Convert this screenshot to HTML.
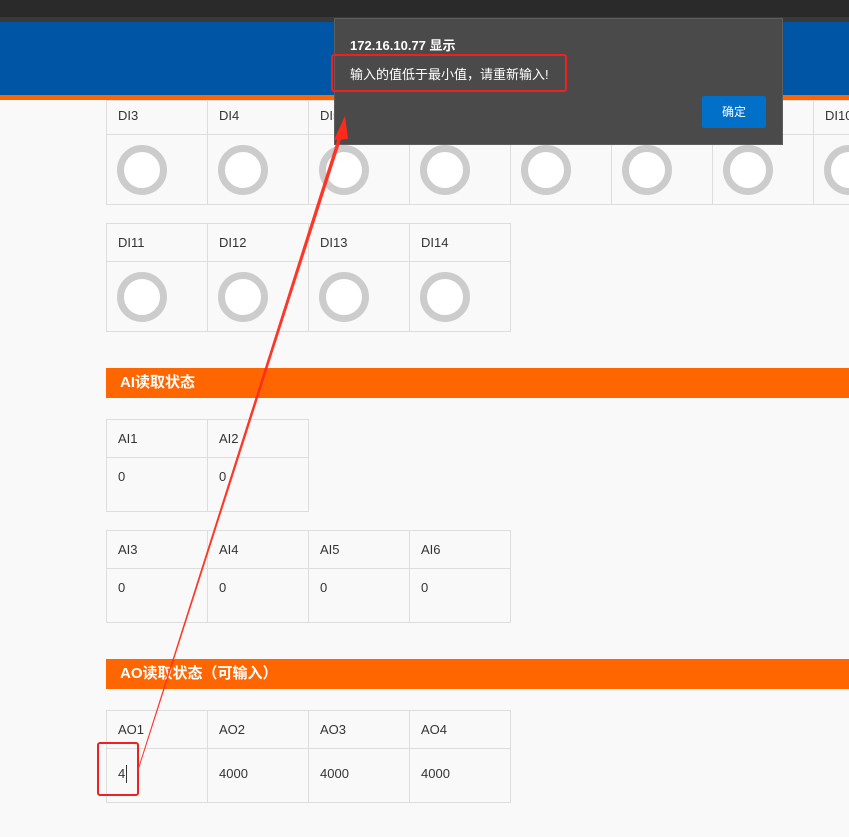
<!DOCTYPE html>
<html><head><meta charset="utf-8"><style>
body{margin:0;width:849px;height:837px;overflow:hidden;background:#f9f9f9;font-family:"Liberation Sans","Noto Sans CJK SC",sans-serif;font-size:13px;color:#333;position:relative}
.a{position:absolute}
.c{position:absolute;border:1px solid #ddd;box-sizing:border-box}
.t{position:absolute;font-size:13px;color:#333}
.ring{position:absolute;width:50px;height:50px;border:7px solid #ccc;border-radius:50%;box-sizing:border-box;background:#fff}
.bar{position:absolute;left:106px;width:743px;height:30px;background:#ff6600;color:#fff;font-weight:bold;font-size:15px;line-height:30px;padding-left:14px;box-sizing:border-box}
</style></head><body>
<div class="a" style="left:0;top:0;width:849px;height:17px;background:#2a2a2a"></div>
<div class="a" style="left:0;top:17px;width:849px;height:5px;background:#3a3a3a"></div>
<div class="a" style="left:0;top:22px;width:849px;height:73px;background:#0055a5"></div>
<div class="a" style="left:0;top:95px;width:849px;height:5px;background:#ff6600"></div>

<div class="bar" style="top:368px">AI读取状态</div>
<div class="bar" style="top:659px">AO读取状态（可输入）</div>

<div class="c" style="left:106px;top:100px;width:760px;height:105px"></div>
<div class="a" style="left:106px;top:134px;width:760px;height:1px;background:#ddd"></div>
<div class="a" style="left:207px;top:100px;width:1px;height:105px;background:#ddd"></div>
<div class="a" style="left:308px;top:100px;width:1px;height:105px;background:#ddd"></div>
<div class="a" style="left:409px;top:100px;width:1px;height:105px;background:#ddd"></div>
<div class="a" style="left:510px;top:100px;width:1px;height:105px;background:#ddd"></div>
<div class="a" style="left:611px;top:100px;width:1px;height:105px;background:#ddd"></div>
<div class="a" style="left:712px;top:100px;width:1px;height:105px;background:#ddd"></div>
<div class="a" style="left:813px;top:100px;width:1px;height:105px;background:#ddd"></div>
<div class="t" style="left:118px;top:108px">DI3</div>
<div class="t" style="left:219px;top:108px">DI4</div>
<div class="t" style="left:320px;top:108px">DI5</div>
<div class="t" style="left:825px;top:108px">DI10</div>
<div class="ring" style="left:117px;top:145px"></div>
<div class="ring" style="left:218px;top:145px"></div>
<div class="ring" style="left:319px;top:145px"></div>
<div class="ring" style="left:420px;top:145px"></div>
<div class="ring" style="left:521px;top:145px"></div>
<div class="ring" style="left:622px;top:145px"></div>
<div class="ring" style="left:723px;top:145px"></div>
<div class="ring" style="left:824px;top:145px"></div>

<div class="c" style="left:106px;top:223px;width:405px;height:109px"></div>
<div class="a" style="left:106px;top:261px;width:405px;height:1px;background:#ddd"></div>
<div class="a" style="left:207px;top:223px;width:1px;height:109px;background:#ddd"></div>
<div class="a" style="left:308px;top:223px;width:1px;height:109px;background:#ddd"></div>
<div class="a" style="left:409px;top:223px;width:1px;height:109px;background:#ddd"></div>
<div class="t" style="left:118px;top:235px">DI11</div>
<div class="t" style="left:219px;top:235px">DI12</div>
<div class="t" style="left:320px;top:235px">DI13</div>
<div class="t" style="left:421px;top:235px">DI14</div>
<div class="ring" style="left:117px;top:272px"></div>
<div class="ring" style="left:218px;top:272px"></div>
<div class="ring" style="left:319px;top:272px"></div>
<div class="ring" style="left:420px;top:272px"></div>

<div class="c" style="left:106px;top:419px;width:203px;height:93px"></div>
<div class="a" style="left:106px;top:457px;width:203px;height:1px;background:#ddd"></div>
<div class="a" style="left:207px;top:419px;width:1px;height:93px;background:#ddd"></div>
<div class="t" style="left:118px;top:431px">AI1</div>
<div class="t" style="left:219px;top:431px">AI2</div>
<div class="t" style="left:118px;top:469px">0</div>
<div class="t" style="left:219px;top:469px">0</div>

<div class="c" style="left:106px;top:530px;width:405px;height:93px"></div>
<div class="a" style="left:106px;top:568px;width:405px;height:1px;background:#ddd"></div>
<div class="a" style="left:207px;top:530px;width:1px;height:93px;background:#ddd"></div>
<div class="a" style="left:308px;top:530px;width:1px;height:93px;background:#ddd"></div>
<div class="a" style="left:409px;top:530px;width:1px;height:93px;background:#ddd"></div>
<div class="t" style="left:118px;top:542px">AI3</div>
<div class="t" style="left:219px;top:542px">AI4</div>
<div class="t" style="left:320px;top:542px">AI5</div>
<div class="t" style="left:421px;top:542px">AI6</div>
<div class="t" style="left:118px;top:580px">0</div>
<div class="t" style="left:219px;top:580px">0</div>
<div class="t" style="left:320px;top:580px">0</div>
<div class="t" style="left:421px;top:580px">0</div>

<div class="c" style="left:106px;top:710px;width:405px;height:93px"></div>
<div class="a" style="left:106px;top:748px;width:405px;height:1px;background:#ddd"></div>
<div class="a" style="left:207px;top:710px;width:1px;height:93px;background:#ddd"></div>
<div class="a" style="left:308px;top:710px;width:1px;height:93px;background:#ddd"></div>
<div class="a" style="left:409px;top:710px;width:1px;height:93px;background:#ddd"></div>
<div class="t" style="left:118px;top:722px">AO1</div>
<div class="t" style="left:219px;top:722px">AO2</div>
<div class="t" style="left:320px;top:722px">AO3</div>
<div class="t" style="left:421px;top:722px">AO4</div>
<div class="t" style="left:118px;top:766px">4</div>
<div class="a" style="left:126px;top:765px;width:1px;height:18px;background:#333"></div>
<div class="t" style="left:219px;top:766px">4000</div>
<div class="t" style="left:320px;top:766px">4000</div>
<div class="t" style="left:421px;top:766px">4000</div>
<div class="a" style="left:97px;top:742px;width:42px;height:54px;border:2px solid #f02020;border-radius:3px;box-sizing:border-box"></div>

<div class="a" style="left:334px;top:18px;width:449px;height:127px;background:#4a4a4a;border:1px solid #5e5e5e;box-sizing:border-box"></div>
<div class="a" style="left:350px;top:35px;color:#fff;font-weight:bold;font-size:13px">172.16.10.77 显示</div>
<div class="a" style="left:350px;top:64px;color:#fff;font-size:13px">输入的值低于最小值，请重新输入!</div>
<div class="a" style="left:331px;top:54px;width:236px;height:38px;border:2px solid #f02020;border-radius:3px;box-sizing:border-box"></div>
<div class="a" style="left:702px;top:96px;width:64px;height:32px;background:#0070c8;border-radius:2px;color:#fff;font-size:12px;line-height:32px;text-align:center">确定</div>

<svg class="a" style="left:0;top:0" width="849" height="837">
<polygon points="137.5,770 138.5,770 342.5,135 339,134" fill="#ff2a1a" opacity="0.95"/>
<polygon points="345,116 334,140 348,139" fill="#ff2a1a"/>
</svg>
</body></html>
